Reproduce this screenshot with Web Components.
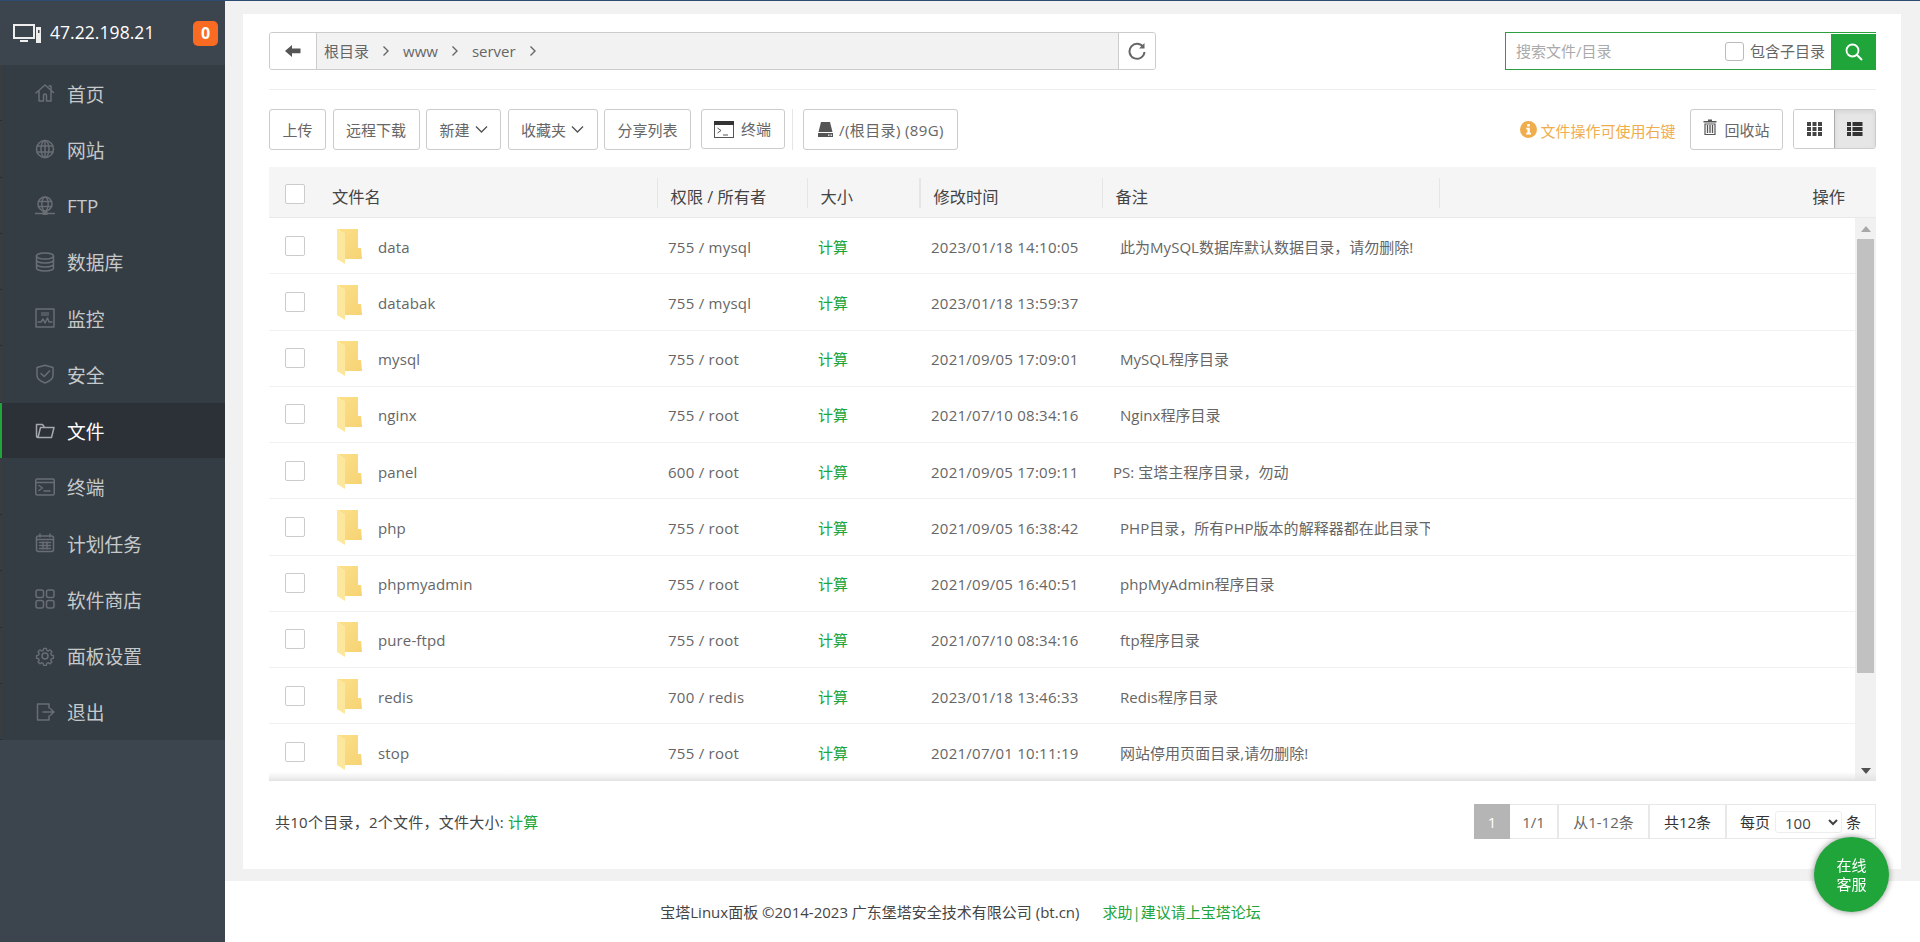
<!DOCTYPE html>
<html lang="zh-CN"><head><meta charset="utf-8"><title>宝塔Linux面板</title>
<style>
html,body{margin:0;height:942px;overflow:hidden;background:#fff;font-family:"Open Sans","Noto Sans CJK SC",sans-serif;font-size:15px;color:#666}
</style></head><body>
<bt-app></bt-app>
<script>
const S='fill="none" stroke="currentColor" stroke-width="1.5" stroke-linecap="round" stroke-linejoin="round"';
const svg=(w,h,b,a='')=>`<svg width="${w}" height="${h}" viewBox="0 0 ${w} ${h}" ${a}>${b}</svg>`;
const ICONS={
 home:svg(20,20,`<path d="M1 10 10 2l8.500 7.500M4 8v10h4.500v-5.500a1.500 1.500 0 0 1 3 0V18H16V8" ${S}/><path d="M14 3h2v3.500" ${S}/>`),
 globe:svg(20,20,`<circle cx="10" cy="10" r="8.500" ${S}/><ellipse cx="10" cy="10" rx="4" ry="8.500" ${S}/><path d="M2 7h16M2 13h16M10 1.500v17" ${S}/>`),
 ftp:svg(20,20,`<circle cx="10" cy="8" r="7" ${S}/><ellipse cx="10" cy="8" rx="3.200" ry="7" ${S}/><path d="M3.500 5.500h13M3.500 10.500h13M0 17.500h20" ${S}/><rect x="7.500" y="15" width="5" height="4" fill="currentColor"/>`),
 db:svg(20,20,`<ellipse cx="10" cy="4" rx="8.500" ry="3" ${S}/><path d="M1.500 4v12c0 1.700 3.800 3 8.500 3s8.500-1.300 8.500-3V4M1.500 8c0 1.700 3.800 3 8.500 3s8.500-1.300 8.500-3M1.500 12c0 1.700 3.800 3 8.500 3s8.500-1.300 8.500-3" ${S}/>`),
 chart:svg(20,20,`<rect x="1" y="1" width="18" height="18" ${S}/><path d="M3 14h3l2-3 2 4 2.500-5 1.500 4h3" ${S} stroke-width="1.200"/><path d="M6 4h8v4H6z" fill="currentColor" opacity=".6"/>`),
 shield:svg(20,20,`<path d="M10 1.200 2 3.500v8c0 3.800 4 6 8 7.500 4-1.500 8-3.700 8-7.500v-8z" ${S}/><path d="m6 9.500 3.200 3L14.500 7" ${S}/>`),
 folder:svg(20,20,`<path d="M3 16.500h13.500L19 6.500H5.500L3 16.500zM3 16.500c-1 0-1.500-.6-1.500-1.500V3.500h6l1.500 2" ${S}/>`),
 term:svg(20,20,`<rect x=".75" y="2" width="18.500" height="16" rx="1.500" ${S}/><path d="M1 5.500h18" ${S}/><path d="m4 8.500 3.500 2.500L4 13.500M9 14h6" ${S}/>`),
 cal:svg(20,20,`<rect x="1.500" y="3" width="17" height="15.500" rx="2" ${S}/><path d="M5 1v3M15 1v3M1.500 6.500h17M4.500 9.500h11M4.500 12.500h11M4.500 15.500h11M8 9v7M12 9v7" ${S} stroke-width="1.100"/>`),
 apps:svg(20,20,`<rect x="1" y="1" width="7.500" height="7.500" rx="2" ${S}/><rect x="11.500" y="1" width="7.500" height="7.500" rx="2" ${S}/><rect x="1" y="11.500" width="7.500" height="7.500" rx="2" ${S}/><rect x="11.500" y="11.500" width="7.500" height="7.500" rx="2" ${S}/>`),
 gear:svg(20,20,`<circle cx="10" cy="10" r="3" ${S}/><path d="M8.500 1.500h3l.5 2.300 1.600.7 2-1.300 2.100 2.100-1.300 2 .7 1.700 2.300.5v3l-2.300.5-.7 1.600 1.300 2-2.100 2.100-2-1.300-1.600.7-.5 2.300h-3l-.5-2.300-1.600-.7-2 1.300-2.100-2.100 1.300-2-.7-1.600-2.300-.5v-3l2.300-.5.7-1.700-1.300-2 2.100-2.100 2 1.300 1.600-.7z" transform="translate(1 1) scale(.9)" ${S}/>`),
 exit:svg(20,20,`<path d="M14 6V2H2.500v16H14v-4M8 10h11M15.500 6.800 19 10l-3.500 3.200" ${S}/>`),
 chev:svg(8,12,`<path d="m1.500 1.500 4.500 4.500-4.500 4.500" fill="none" stroke="currentColor" stroke-width="1.400"/>`),
 down:svg(13,9,`<path d="m1 1.500 5.500 5.500L12 1.500" fill="none" stroke="currentColor" stroke-width="1.400"/>`),
 tbterm:svg(20,17,`<rect x=".5" y=".5" width="19" height="16" fill="#fff" stroke="#555"/><rect width="20" height="4" fill="#333"/><path d="m3.500 7 3.500 2.500L3.500 12M9 14h5" fill="none" stroke="#555"/>`),
 disk:svg(15,16,`<path d="M3 0h9l2.500 10H.5z" fill="#555"/><path d="M0 11h15v4H0z" fill="#555"/><path d="M10 12.500h1.500v1.300H10zM12.500 12.500H14v1.300h-1.500z" fill="#fff"/>`),
 trash:svg(14,16,`<path d="M5 .5h4v1.500h4.500v1.500H.5V2H5z" fill="#555"/><path d="M2 5h10v10.500H2z" fill="none" stroke="#555" stroke-width="1.200"/><path d="M4.500 6v8M7 6v8M9.500 6v8" stroke="#555" stroke-width="1.300"/>`),
};
function define(name,css,render){
 customElements.define(name,class extends HTMLElement{
  constructor(){super();this.attachShadow({mode:'open'})}
  connectedCallback(){this.shadowRoot.innerHTML=`<style>${css}</style>`+render(this)}
 })
}
define('bt-icon',`:host{display:inline-flex;line-height:0}`,el=>ICONS[el.getAttribute('name')]||'');

define('bt-nav-item',`
:host{display:flex;height:56.250px;box-sizing:border-box;align-items:center;padding-left:35px;background:#353d44;color:#c6c9cb;font-size:18.750px;position:relative}
:host([active]){background:linear-gradient(#2c3138 0 55px,#353d44 55px);color:#fff}
.strip{position:absolute;left:0;top:0;bottom:0;width:2px;background:#3a3d3f;border-bottom:1px solid #2a2d30;box-sizing:border-box}
:host([active]) .strip{background:#20a53a;border:0;bottom:1px}
bt-icon{color:#686e73;width:20px;margin-right:12px}
:host([active]) bt-icon{color:#a5a8ab}
`,el=>`<span class="strip"></span><bt-icon name="${el.getAttribute('icon')}"></bt-icon><slot></slot>`);

define('bt-sidebar',`
:host{display:block;width:225px;flex:none;background:#3c444d;color:#fff}
header{height:64px;display:flex;align-items:center;padding-left:13px;box-sizing:border-box}
.ip{font-size:17.500px;margin-left:9px;flex:1;line-height:1;letter-spacing:.05px}
.badge{width:25px;height:25px;border-radius:5px;background:#f96b23;font-weight:700;font-size:16px;text-align:center;line-height:24px;margin-right:7px}
nav{display:block}
`,()=>`<header>${svg(28,20,`<path d="M1 2h20v13H1z" fill="none" stroke="#eee" stroke-width="2"/><path d="M7 17h8v2H7z" fill="#eee"/><path d="M23 4h5v16h-5z" fill="#eee"/><path d="M25 7h1.500v3H25z" fill="#3c444d"/>`)}<span class="ip">47.22.198.21</span><span class="badge">0</span></header>
<nav><bt-nav-item icon="home">首页</bt-nav-item><bt-nav-item icon="globe">网站</bt-nav-item><bt-nav-item icon="ftp">FTP</bt-nav-item><bt-nav-item icon="db">数据库</bt-nav-item><bt-nav-item icon="chart">监控</bt-nav-item><bt-nav-item icon="shield">安全</bt-nav-item><bt-nav-item icon="folder" active>文件</bt-nav-item><bt-nav-item icon="term">终端</bt-nav-item><bt-nav-item icon="cal">计划任务</bt-nav-item><bt-nav-item icon="apps">软件商店</bt-nav-item><bt-nav-item icon="gear">面板设置</bt-nav-item><bt-nav-item icon="exit">退出</bt-nav-item></nav>`);

define('bt-path-bar',`
:host{display:flex;width:887px;height:38px;box-sizing:border-box;border:1px solid #ccc;border-radius:3px;background:#f2f2f2;color:#666;align-items:center;overflow:hidden}
.btn{height:100%;background:#fff;display:flex;align-items:center;justify-content:center;flex:none}
.back{width:46px;border-right:1px solid #ccc}
.re{width:36px;border-left:1px solid #ccc;margin-left:auto}
.crumbs{display:flex;align-items:center;gap:13px;margin-left:7px;line-height:20px}
bt-icon{color:#666}
`,()=>`<div class="btn back">${svg(16,12,`<path d="M7 0v3.500h8.500v4.800H7V12L0 6z" fill="#555"/>`)}</div>
<div class="crumbs"><span>根目录</span><bt-icon name="chev"></bt-icon><span>www</span><bt-icon name="chev"></bt-icon><span>server</span><bt-icon name="chev"></bt-icon></div>
<div class="btn re">${svg(18,18,`<path d="M15.500 5.500A7.500 7.500 0 1 0 16.500 10" fill="none" stroke="#666" stroke-width="2"/><path d="M16.500 1v5.500H11z" fill="#666"/>`)}</div>`);

define('bt-search',`
:host{display:flex;width:371px;height:38px;box-sizing:border-box;border:1px solid #2d9f3f;border-right:0;align-items:center;background:#fff;color:#666}
.ph{color:#aaa;margin-left:10px;flex:1;line-height:20px}
.box{width:19px;height:19px;box-sizing:border-box;border:1px solid #bbb;border-radius:3px;margin-right:6px}
.lab{margin-right:6px;line-height:20px}
.go{width:45px;height:36px;margin-top:1px;background:#20a53a;display:flex;align-items:center;justify-content:center}
`,()=>`<span class="ph">搜索文件/目录</span><span class="box"></span><span class="lab">包含子目录</span><div class="go">${svg(18,18,`<circle cx="7.500" cy="7.500" r="6" fill="none" stroke="#fff" stroke-width="1.800"/><path d="m12 12 5 5" stroke="#fff" stroke-width="2"/>`)}</div>`);

define('bt-btn',`
:host{display:inline-flex;align-items:center;height:41px;box-sizing:border-box;border:1px solid #ccc;border-radius:3px;padding:0 12.500px;background:#fff;color:#666;line-height:20px;white-space:nowrap;flex:none}
:host([short]){height:40px;align-self:flex-start}
`,()=>`<slot></slot>`);

define('bt-view-toggle',`
:host{display:flex;height:40px;align-self:flex-start;width:83px;box-sizing:border-box;border:1px solid #ccc;border-radius:3px;overflow:hidden}
div{display:flex;align-items:center;justify-content:center}
.a{width:40px;background:#fff}
.b{flex:1;background:#e6e6e6;border-left:1px solid #adadad;box-shadow:inset 0 2px 4px rgba(0,0,0,.08)}
`,()=>{let g='';for(let y=0;y<3;y++)for(let x=0;x<3;x++)g+=`<rect x="${x*5.5}" y="${y*5}" width="4" height="4" fill="#444"/>`;
let l='';for(let y=0;y<3;y++)l+=`<rect y="${y*5}" width="4" height="4" fill="#333"/><rect x="5.500" y="${y*5}" width="10" height="4" fill="#333"/>`;
return `<div class="a">${svg(15,14,g)}</div><div class="b">${svg(16,14,l)}</div>`});

define('bt-toolbar',`
:host{display:flex;height:41px;gap:6.500px;align-items:stretch}
.sep{width:1px;background:#e6e6e6;margin:0 3.500px 0 1px}
.tip{margin-left:auto;display:flex;align-items:center;color:#f0ad4e;margin-right:8.500px;line-height:20px;padding-top:3px;box-sizing:border-box}
.tip svg{margin-right:3px;margin-top:-3px}
bt-btn svg{flex:none}
.i{margin-right:7px}.d{margin-left:5px;color:#555}
.gap{margin-left:3px}
.disk{padding:0 13px 0 14px}.disk bt-icon{margin-right:6px}.disk span{letter-spacing:.38px}
.rec{padding:0 12px}.rec .i{margin-top:-5px}
.vt{margin-left:4px}
`,()=>`<bt-btn>上传</bt-btn><bt-btn>远程下载</bt-btn><bt-btn>新建<bt-icon class="d" name="down"></bt-icon></bt-btn><bt-btn>收藏夹<bt-icon class="d" name="down"></bt-icon></bt-btn><bt-btn>分享列表</bt-btn>
<bt-btn short class="gap"><bt-icon class="i" name="tbterm"></bt-icon>终端</bt-btn><span class="sep"></span><bt-btn class="disk"><bt-icon name="disk"></bt-icon><span>/(根目录) (89G)</span></bt-btn>
<span class="tip">${svg(17,17,`<circle cx="8.500" cy="8.500" r="8.500" fill="#f0ad4e"/><path d="M7.200 3h2.600v2.400H7.200zM6.300 6.800h3.500v5h1.200v1.700H6.200v-1.700h1.200V8.500H6.300z" fill="#fff"/>`)}文件操作可使用右键</span>
<bt-btn class="rec"><bt-icon class="i" name="trash"></bt-icon>回收站</bt-btn><bt-view-toggle class="vt"></bt-view-toggle>`);

const GRID='display:grid;grid-template-columns:389px 150px 113px 182px 337px 1fr;';
define('bt-table-head',`
:host{${GRID}width:1607px;height:51px;box-sizing:border-box;background:#f5f5f5;border-bottom:1px solid #e9e9e9;color:#444;font-size:16.250px;line-height:20px;align-items:center}
.c{height:30px;display:flex;align-items:center;border-right:1px solid #e6e6e6;padding:8px 0 0 12.500px;box-sizing:border-box;margin-top:1px}
.c.t{border-right:2px solid #e6e6e6}
.n{padding-left:16px}
.box{width:20px;height:20px;box-sizing:border-box;border:1px solid #ccc;border-radius:2px;background:#fff;margin-right:27px;margin-top:-5px}
.op{border:0;justify-content:flex-end;padding-right:31px;grid-column:6}
`,()=>`<div class="c n"><span class="box"></span>文件名</div><div class="c">权限 / 所有者</div><div class="c t">大小</div><div class="c">修改时间</div><div class="c">备注</div><div class="c op">操作</div>`);

define('bt-file-row',`
:host{${GRID}height:56.250px;box-sizing:border-box;border-bottom:1px solid #f1f1f1;align-items:center;color:#666;line-height:20px;white-space:nowrap}
.c{padding:2px 0 0 10px;overflow:hidden;box-sizing:border-box}
.l{letter-spacing:.25px}
.n{padding:0 0 0 16px;display:flex;align-items:center}
.n span:last-child{margin-top:2px;letter-spacing:.12px}
.box{width:20px;height:20px;box-sizing:border-box;border:1px solid #ccc;border-radius:2px;margin-right:32px}
.n svg{margin-right:16px;margin-top:1px}
.calc{color:#20a53a}
.note{padding-left:17px}
.note span{display:block;width:310px;overflow:hidden;letter-spacing:.03px}
:host([shift]) .note{padding-left:10px}
`,el=>`<div class="c n"><span class="box"></span>${svg(25,35,`<path d="M0 0h21v19h3l1 11H8V5z" fill="url(#g)"/><path d="M0 0 8 5v30l-8-5z" fill="#fde79c"/><defs><linearGradient id="g" x1="0" y1="0" x2="1" y2="1"><stop offset="0" stop-color="#fce08a"/><stop offset="1" stop-color="#f6d374"/></linearGradient></defs>`)}<span>${el.getAttribute('name')}</span></div><div class="c l">${el.getAttribute('perm')}</div><div class="c calc">计算</div><div class="c l">${el.getAttribute('time')}</div><div class="c note"><span>${el.getAttribute('note')||''}</span></div><div></div>`);

define('bt-scrollbar',`
:host{display:flex;flex-direction:column;width:21px;flex:none;background:#f1f1f1;box-sizing:border-box}
.ar{height:21px;display:flex;align-items:center;justify-content:center;flex:none}
.th{height:434px;margin:0 2px;background:#c1c1c1;flex:none}
.sp{flex:1}
`,()=>`<div class="ar">${svg(10,6,`<path d="M5 0l5 6H0z" fill="#a8a8a8"/>`)}</div><div class="th"></div><div class="sp"></div><div class="ar">${svg(10,6,`<path d="M0 0h10L5 6z" fill="#505050"/>`)}</div>`);

const FILES=[['data','755 / mysql','2023/01/18 14:10:05','此为MySQL数据库默认数据目录，请勿删除!'],['databak','755 / mysql','2023/01/18 13:59:37',''],['mysql','755 / root','2021/09/05 17:09:01','MySQL程序目录'],['nginx','755 / root','2021/07/10 08:34:16','Nginx程序目录'],['panel','600 / root','2021/09/05 17:09:11','PS: 宝塔主程序目录，勿动'],['php','755 / root','2021/09/05 16:38:42','PHP目录，所有PHP版本的解释器都在此目录下'],['phpmyadmin','755 / root','2021/09/05 16:40:51','phpMyAdmin程序目录'],['pure-ftpd','755 / root','2021/07/10 08:34:16','ftp程序目录'],['redis','700 / redis','2023/01/18 13:46:33','Redis程序目录'],['stop','755 / root','2021/07/01 10:11:19','网站停用页面目录,请勿删除!']];
define('bt-file-list',`
:host{display:flex;height:563px;width:1607px;position:relative;overflow:hidden}
.rows{flex:1;min-width:0}
.shade{position:absolute;left:0;right:0;bottom:0;height:9px;background:linear-gradient(to bottom,rgba(225,225,225,0),rgba(225,225,225,.5) 60%,#e3e3e3)}
`,()=>`<div class="rows">${FILES.map(f=>`<bt-file-row name="${f[0]}" perm="${f[1]}" time="${f[2]}" note="${f[3]}"${f[0]=='panel'?' shift':''}></bt-file-row>`).join('')}</div><bt-scrollbar></bt-scrollbar><div class="shade"></div>`);

define('bt-pager',`
:host{display:flex;height:35px;box-sizing:border-box;border:1px solid #e8e8e8;color:#666;align-items:center;line-height:20px;white-space:nowrap}
div{height:100%;display:flex;align-items:center;justify-content:center;box-sizing:border-box;border-right:2px solid #e8e8e8}
.cur{width:36px;background:#b5b5b5;color:#fff;margin:-1px 0 -1px -1px;height:35px;border:0}
.d{color:#333}
.last{border:0;padding:0 0 0 13px;justify-content:flex-start;width:148px}
select{width:67px;height:22px;margin:0 4px 0 5px;border:1px solid #eee;border-radius:3px;background:#fff;font:15px "Open Sans","Noto Sans CJK SC",sans-serif;color:#444;padding:0 0 0 5px;outline:0}
`,()=>`<div class="cur">1</div><div style="width:49px">1/1</div><div style="width:91px">从1-12条</div><div class="d" style="width:77px">共12条</div><div class="last d">每页<select><option>100</option></select>条</div>`);

define('bt-file-panel',`
:host{display:block;flex:1;background:#fff;padding:18px 25px 0 26px;box-sizing:border-box;min-width:0}
.top{display:flex;justify-content:space-between;align-items:flex-start}
hr{border:0;height:1px;background:#eee;margin:19px 0}
bt-table-head{margin-top:17px}
.foot{display:flex;justify-content:space-between;align-items:center;margin-top:23px}
.sum{color:#444;margin-left:6px;line-height:20px;letter-spacing:.25px}
.sum a{color:#20a53a}
`,()=>`<div class="top"><bt-path-bar></bt-path-bar><bt-search></bt-search></div><hr><bt-toolbar></bt-toolbar><bt-table-head></bt-table-head><bt-file-list></bt-file-list>
<div class="foot"><span class="sum">共10个目录，2个文件，文件大小: <a>计算</a></span><bt-pager></bt-pager></div>`);

define('bt-footer',`
:host{display:flex;height:61px;box-sizing:border-box;background:#fff;align-items:center;justify-content:center;color:#444;line-height:20px;white-space:nowrap;padding-right:224px}
a{color:#20a53a;margin-left:23px}
`,()=>`<span>宝塔Linux面板 ©2014-2023 广东堡塔安全技术有限公司 (bt.cn)</span><a>求助|建议请上宝塔论坛</a>`);

define('bt-float',`
:host{position:fixed;left:1814px;top:837px;width:75px;height:75px;border-radius:50%;background:#20a53a;color:#fff;box-shadow:0 0 6px rgba(0,0,0,.45);display:flex;align-items:center;justify-content:center;text-align:center;font-size:15px;line-height:19px}
`,()=>`<span>在线<br>客服</span>`);

define('bt-app',`
:host{display:flex;flex-direction:column;height:942px}
.line{height:1px;background:#2c4c74;flex:none}
.body{flex:1;display:flex;min-height:0}
main{flex:1;display:flex;flex-direction:column;min-width:0;background:#f1f1f1}
.wrap{flex:1;display:flex;padding:13px 19px 12px 18px;min-height:0}
`,()=>`<div class="line"></div><div class="body"><bt-sidebar></bt-sidebar><main><div class="wrap"><bt-file-panel></bt-file-panel></div><bt-footer></bt-footer></main></div><bt-float></bt-float>`);
</script>
</body></html>
